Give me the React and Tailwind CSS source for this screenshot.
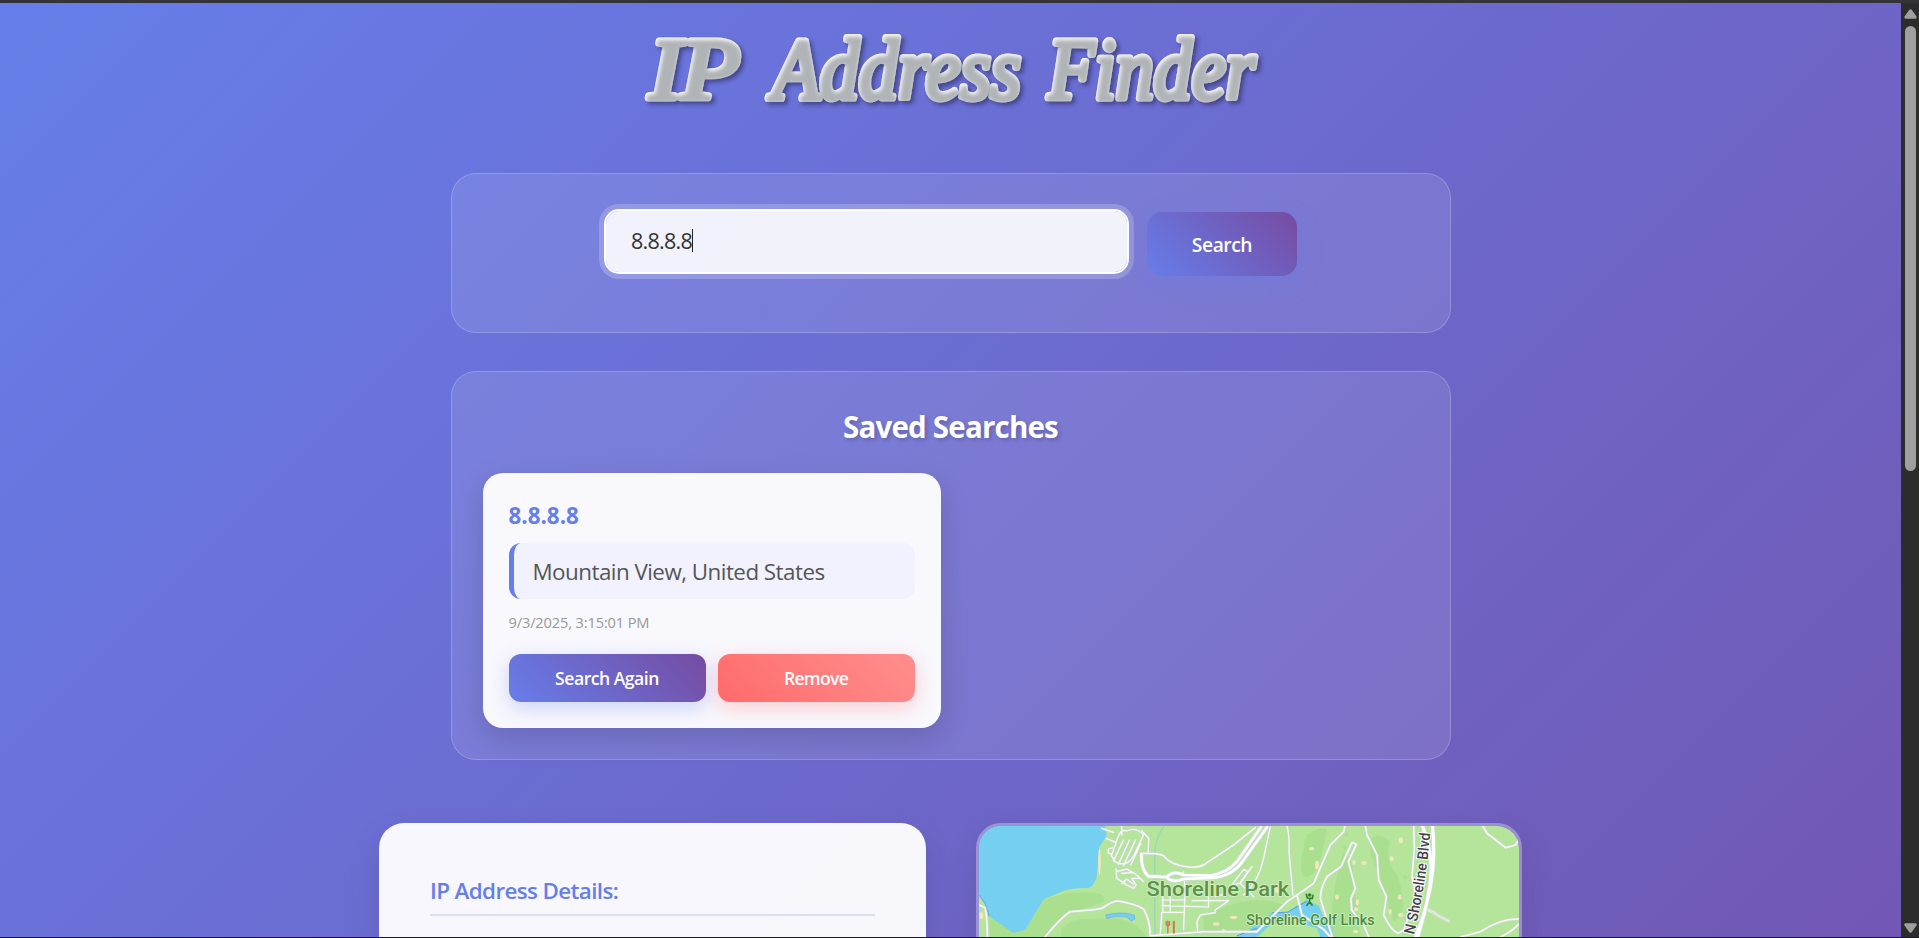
const roads = [
  { d: "M395 40L430 52M455 33L455 60M408 70L436 82M470 48Q500 35 520 60L492 120Q470 160 435 140L424 122L445 62Q455 42 470 48M428 98L415 102L414 114L424 118M460 75L430 138M478 75L445 148M496 75L460 152M512 85L482 150M515 48L536 70L534 112", w: 5 },
  { d: "M512 115L560 116L580 122Q600 150 650 155Q680 160 700 150L790 90L855 38", w: 6 },
  { d: "M438 162L440 190L470 210L490 220L498 210L485 190L510 190M440 170L470 162L500 180L520 200M455 175L490 172M456 205L470 192L490 208", w: 5 },
  { d: "M225 366Q270 310 300 290Q380 285 395 280Q430 256 445 258Q500 268 520 282Q540 315 540 360", w: 6 },
  { d: "M27 270L45 278Q52 310 52 366", w: 6 },
  { d: "M600 220L600 292M578 225L578 290M575 255L640 255M575 272L715 276M575 292L640 292M640 170L645 225L640 345M666 257L775 257L735 285L735 293L690 300L680 320L682 345M735 245L770 235M715 245L715 276M575 292L570 360M785 210L820 163L833 170L808 205L785 210M900 36L880 130Q865 200 820 240M950 33Q958 60 956 110L968 240M850 245L810 205L845 155", w: 5 },
  { d: "M540 362L600 358L700 350L860 350L950 260L980 240L1030 205L1080 90L1120 50L1124 33M980 240L995 300L1060 343L1080 366", w: 6 },
  { d: "M1086 366L1050 250Q1050 220 1070 185L1112 155L1145 82L1158 88L1134 140L1155 220L1142 250L1144 285L1180 330L1195 366", w: 6 },
  { d: "M1185 33L1190 60L1220 120L1225 195L1248 245L1240 300Q1260 345 1283 355L1300 345L1336 245L1325 185L1332 100L1330 33", w: 6 },
  { d: "M1537 33L1550 55L1605 98L1635 90L1647 70M1470 366L1530 350Q1590 310 1647 312M1590 366Q1625 350 1647 325", w: 6 },
];

const sand = [
  [388, 140, 4, 40], [34, 302, 6, 10], [738, 327, 10, 5], [790, 307, 12, 5], [760, 346, 7, 5],
  [1024, 101, 8, 5], [1040, 150, 6, 13], [918, 226, 10, 7], [1151, 142, 5, 8], [1181, 144, 8, 6],
  [1291, 76, 7, 9], [1264, 131, 6, 8], [1288, 246, 6, 8], [1259, 290, 5, 8], [1291, 300, 8, 6],
  [1100, 246, 6, 8], [1161, 262, 5, 9], [1157, 283, 6, 6], [1156, 350, 8, 5],
];

function Map() {
  return (
    <svg className="block h-[111px] w-full" viewBox="27 33 1620 333" preserveAspectRatio="none" fontFamily="Roboto, sans-serif">
      <rect x="27" y="33" width="1620" height="333" fill="#b5e59b" />
      <g fill="#a9df8f">
        <path d="M55 300Q130 350 165 345L222 255Q290 225 380 234Q410 240 400 260Q330 290 290 290L225 366H60z" />
        <path d="M275 366Q260 330 330 312L440 310Q500 320 530 366z" />
        <path d="M1010 60Q1050 30 1070 45L1055 110Q1040 190 1000 185Q980 160 1010 60zM1200 70Q1230 50 1260 80Q1240 130 1280 180Q1320 290 1270 320Q1250 260 1225 170Q1190 110 1200 70zM1120 110Q1150 130 1150 200L1170 366H1085Q1075 250 1120 110zM700 300Q850 230 940 270L860 350H700z" />
        <circle cx="1128" cy="60" r="6" /><circle cx="1125" cy="100" r="6" /><circle cx="1305" cy="187" r="6" />
      </g>
      <path d="M27 33H405L410 62L388 95L380 185Q370 215 355 219Q300 220 285 226L222 252L165 345L130 354L60 305L45 265L27 240z" fill="#75cff0" />
      <path d="M27 240L45 265L58 303" stroke="#63a8ea" strokeWidth="3" fill="none" />
      <path d="M407 300Q450 288 492 300L494 312L484 318L470 306Q440 300 410 310z" fill="#75cff0" stroke="#66a9e8" strokeWidth="2" />
      <path d="M800 366L870 322L905 292L950 292L1010 255L1045 272L1060 308L1085 335L1090 366H1050L1040 340L990 325L975 300L900 330L860 366z" fill="#75cff0" />
      <path d="M800 362L860 340M905 294L950 292L1010 258" stroke="#5f9de6" strokeWidth="3" fill="none" />
      <path d="M582 33Q550 75 554 130V360" stroke="#9bd5bd" strokeWidth="4" fill="none" />
      <g fill="#efe7c0">
        {sand.map(([x, y, rx, ry], i) => <ellipse key={i} cx={x} cy={y} rx={rx} ry={ry} />)}
      </g>
      <g fill="none" strokeLinejoin="round" strokeLinecap="round">
        {roads.map((r, i) => <path key={i} d={r.d} stroke="#cfd9d2" strokeWidth={r.w + 2} />)}
        {roads.map((r, i) => <path key={i} d={r.d} stroke="#f8f8fa" strokeWidth={r.w - 1.5} />)}
        <path d="M514 117Q512 165 535 184L590 186Q610 165 640 180L720 182Q770 175 800 140L872 37M590 188Q610 205 640 192L735 188Q790 180 820 135L890 37" stroke="#cfdcd8" strokeWidth="12" />
        <path d="M514 117Q512 165 535 184L590 186Q610 165 640 180L720 182Q770 175 800 140L872 37M590 188Q610 205 640 192L735 188Q790 180 820 135L890 37" stroke="#fff" strokeWidth="8" />
        <path d="M1356 33Q1395 130 1376 225Q1368 290 1335 366M1386 33Q1397 130 1378 225Q1362 300 1342 366" stroke="#d5dcdb" strokeWidth="13" />
        <path d="M1356 33Q1395 130 1376 225Q1368 290 1335 366M1386 33Q1397 130 1378 225Q1362 300 1342 366" stroke="#fff" strokeWidth="9" />
        <path d="M1372 285Q1390 290 1400 300L1434 318" stroke="#e4e4e4" strokeWidth="9" />
      </g>
      <g stroke="#d9734a" fill="none" strokeLinecap="round">
        <path d="M588 320V329Q593 337 598 329V320M593 318V354" strokeWidth="4" />
        <path d="M611 320V353" strokeWidth="6" />
      </g>
      <g stroke="#2f8130" fill="none" strokeWidth="5" strokeLinecap="round">
        <circle cx="1018" cy="240" r="3" fill="#2f8130" />
        <path d="M1008 238L1011 249L1026 250L1028 241M1018 250V260L1010 271M1018 260L1025 270" />
      </g>
      <g fill="#5b9148" stroke="#d6efc7" strokeWidth="5" paintOrder="stroke" strokeLinejoin="round" fontWeight="500">
        <text x="529" y="243" fontSize="63" textLength="428" lengthAdjust="spacingAndGlyphs">Shoreline Park</text>
        <text x="828" y="329" fontSize="45" fill="#4c8a3d" textLength="385" lengthAdjust="spacingAndGlyphs">Shoreline Golf Links</text>
      </g>
      <path id="blvd" d="M1331 360Q1366 215 1380 48" fill="none" />
      <text fontSize="45" fontWeight="500" fill="#444048" stroke="#fff" strokeWidth="6" paintOrder="stroke" strokeLinejoin="round">
        <textPath href="#blvd" textLength="310" lengthAdjust="spacingAndGlyphs">N Shoreline Blvd</textPath>
      </text>
    </svg>
  );
}

function Title() {
  return (
    <h1 className="h-[131px] w-[640px] shrink-0">
      <svg className="block overflow-visible" width="640" height="131" viewBox="630 3 640 131" fontFamily="'Liberation Serif', serif" fontStyle="italic" fontSize="86">
        <defs>
          <filter id="bevel" x="-5%" y="-20%" width="110%" height="150%">
            <feGaussianBlur in="SourceAlpha" stdDeviation="2" result="soft" />
            <feOffset in="soft" dx="3" dy="3" result="low" />
            <feFlood floodColor="#2c2c5c" floodOpacity=".6" />
            <feComposite in2="low" operator="in" result="drop" />
            <feOffset in="soft" dx="0.5" dy="2" result="shift" />
            <feComposite in="SourceAlpha" in2="shift" operator="out" result="rim" />
            <feFlood floodColor="#ffffff" />
            <feComposite in2="rim" operator="in" result="light" />
            <feMerge>
              <feMergeNode in="drop" /><feMergeNode in="SourceGraphic" /><feMergeNode in="light" />
            </feMerge>
          </filter>
        </defs>
        <g filter="url(#bevel)" fill="#b0b4b7" stroke="#b0b4b7" strokeWidth="7" strokeLinejoin="round" strokeLinecap="round">
          <text x="648" y="98" textLength="91" lengthAdjust="spacingAndGlyphs">IP</text>
          <text x="771" y="98" textLength="249" lengthAdjust="spacingAndGlyphs">Address</text>
          <text x="1047" y="98" textLength="207" lengthAdjust="spacingAndGlyphs">Finder</text>
        </g>
      </svg>
    </h1>
  );
}

export default function App() {
  return (
    <div className="flex h-[938px] w-[1919px] flex-col overflow-hidden bg-[#1d1b22] font-['Open_Sans',sans-serif]">
      <div className="h-[3px] shrink-0 bg-[#343438]" />
      <div className="flex h-[934px] shrink-0 overflow-hidden">
        <main className="flex h-[1877px] w-[1901px] shrink-0 flex-col items-center bg-[linear-gradient(135deg,#667eea_0%,#764ba2_100%)]">
          <Title />
          <section className="mt-[39px] flex h-[160px] w-[1000px] shrink-0 justify-center gap-[18px] rounded-[25px] border border-white/20 bg-white/10 pt-[35px]">
            <div className="flex h-[65px] w-[525px] items-start rounded-[15px] border-2 border-white bg-white/90 bg-clip-padding pl-[25px] pt-[16px] shadow-[0_0_0_5px_rgba(255,255,255,0.2)]">
              <span className="text-[21.5px] leading-[27px] tracking-[-0.72px] text-[#333]">8.8.8.8</span>
              <span className="mt-0.5 h-[23px] w-px bg-[#222]" />
            </div>
            <button className="mt-[3px] h-16 w-[150px] rounded-[15px] bg-[linear-gradient(45deg,#667eea,#764ba2)] pt-0.5 text-[19.2px] font-semibold tracking-[-0.4px] text-white shadow-[0_8px_25px_rgba(102,126,234,0.3)]">Search</button>
          </section>

          <section className="mt-[38px] flex h-[389px] w-[1000px] shrink-0 flex-col rounded-[25px] border border-white/20 bg-white/10 px-[31px]">
            <h2 className="mt-[33px] h-[43px] text-center text-[29.5px] leading-[43px] font-bold tracking-[-0.8px] text-white [text-shadow:2px_2px_4px_rgba(0,0,0,0.2)]">Saved Searches</h2>
            <article className="mt-[25px] h-[255px] w-[458px] rounded-[20px] bg-white/95 px-[26px] shadow-[0_10px_30px_rgba(0,0,0,0.15)]">
              <h3 className="pt-[27px] text-[22.4px] leading-[31px] font-bold text-[#667eea]">8.8.8.8</h3>
              <div className="mt-3 flex h-14 items-center rounded-[12px] border-l-[5px] border-[#667eea] bg-[#f2f2fe] pl-[19px] pt-px text-[22.4px] tracking-[-0.53px] text-[#555]">Mountain View, United States</div>
              <p className="mt-3 text-[14.6px] leading-[22px] tracking-[-0.13px] text-[#999]">9/3/2025, 3:15:01 PM</p>
              <div className="mt-[21px] flex gap-3">
                <button className="h-12 flex-1 rounded-[12px] bg-[linear-gradient(45deg,#667eea,#764ba2)] pt-px text-[17.6px] font-semibold tracking-[-0.5px] text-white shadow-[0_6px_20px_rgba(102,126,234,0.3)]">Search Again</button>
                <button className="h-12 flex-1 rounded-[12px] bg-[linear-gradient(45deg,#ff6b6b,#ff8e8e)] pt-px text-[17.6px] font-semibold tracking-[-0.7px] text-white shadow-[0_6px_20px_rgba(255,107,107,0.3)]">Remove</button>
              </div>
            </article>
          </section>

          <div className="mt-[63px] flex w-[1143px] shrink-0 gap-[50px]">
            <section className="h-[420px] w-[546.5px] shrink-0 rounded-[25px] bg-white/95 px-[51px] pt-[51px] shadow-[0_15px_35px_rgba(0,0,0,0.1)]">
              <h2 className="h-[42px] border-b-2 border-[#667eea]/20 text-[22.4px] leading-[33px] font-semibold tracking-[-0.62px] text-[#667eea]">IP Address Details:</h2>
            </section>
            <section className="h-[420px] w-[546.5px] shrink-0 overflow-hidden rounded-[25px] border-[3px] border-white/30 bg-clip-padding shadow-[0_15px_35px_rgba(0,0,0,0.1)]">
              <Map />
            </section>
          </div>
        </main>
        <aside className="flex h-[934px] w-[18px] shrink-0 flex-col items-center bg-[#2c2c2c] pt-[6px]">
          <svg width="13" height="10" viewBox="0 0 13 10" fill="#9f9f9f"><path d="M5.3.8Q6.5-.5 7.7.8L12.5 7.5Q13.2 9.5 11.5 9.7H1.5Q-.2 9.5.5 7.5z" /></svg>
          <div className="mt-[7px] h-[445px] w-[11px] rounded-full bg-[#9f9f9f]" />
          <svg className="mt-[452px]" width="13" height="10" viewBox="0 0 13 10" fill="#9f9f9f"><path d="M5.3 9.2Q6.5 10.5 7.7 9.2L12.5 2.5Q13.2.5 11.5.3H1.5Q-.2.5.5 2.5z" /></svg>
        </aside>
      </div>
    </div>
  );
}
